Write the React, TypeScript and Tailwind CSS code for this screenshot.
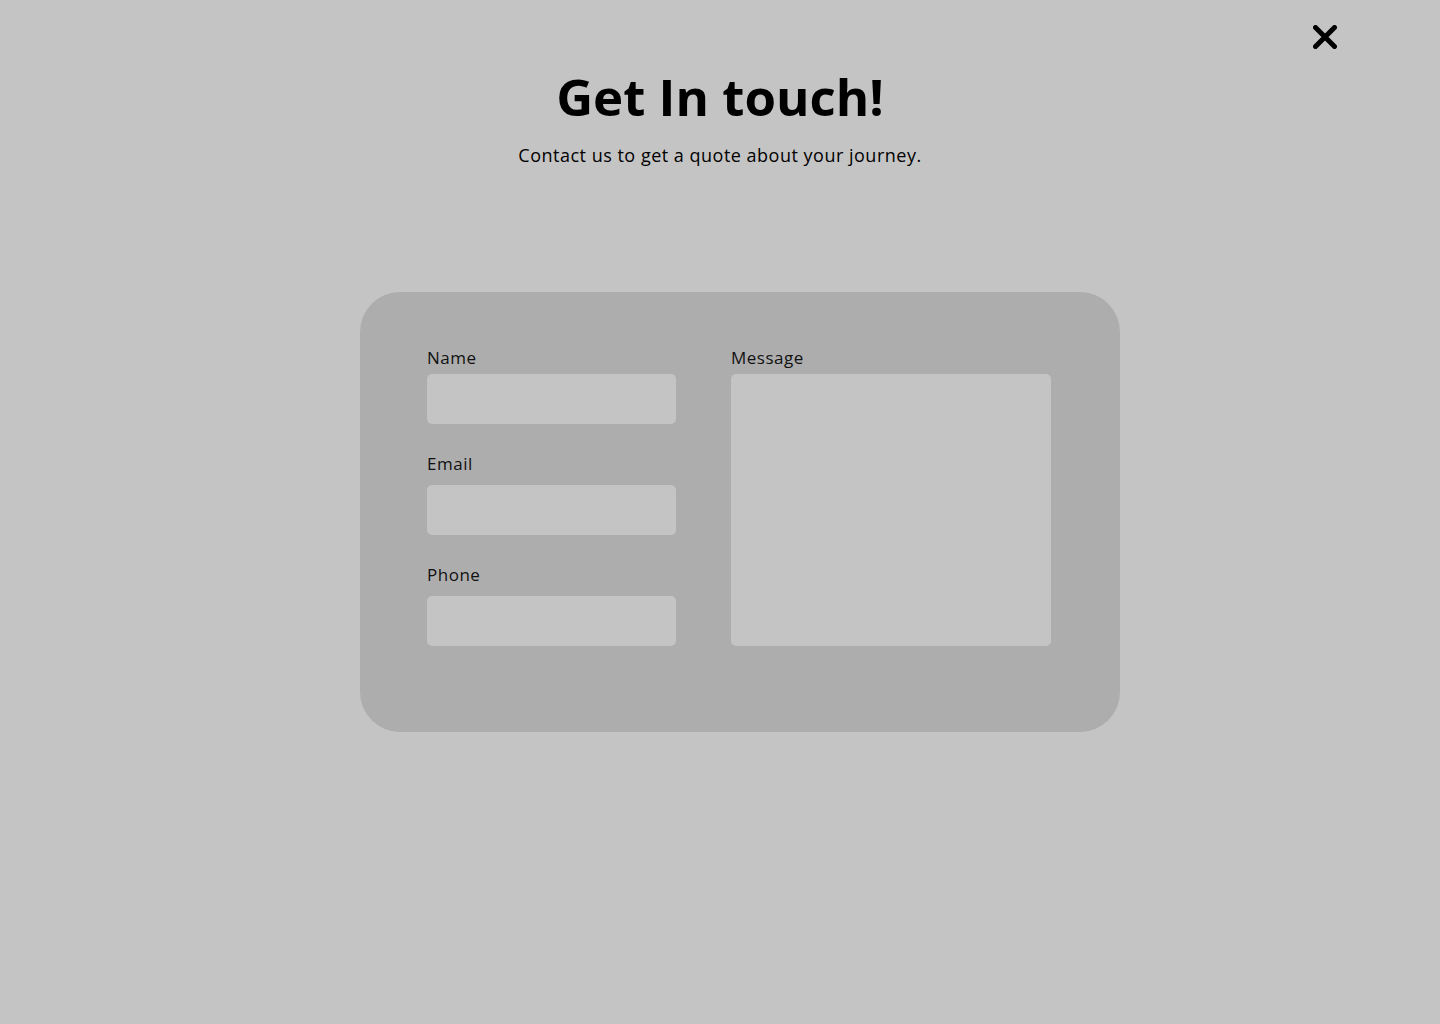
import React from "react";

function Field({ label, gap }: { label: string; gap: string }) {
	return (
		<label className={`flex flex-col ${gap}`}>
			<span className="text-[17px] leading-[20px] tracking-[0.5px] text-[#111]">{label}</span>
			<input
				type="text"
				className="h-[50px] w-full rounded-[5px] bg-[#c4c4c4] px-3 outline-none"
			/>
		</label>
	);
}

export default function App() {
	return (
		<div
			className="relative flex min-h-[1024px] w-full flex-col items-center bg-[#c4c4c4] text-black"
			style={{ fontFamily: '"Open Sans", "Liberation Sans", sans-serif' }}
		>
			<button
				type="button"
				aria-label="Close"
				className="absolute right-[103px] top-[25px] h-[24px] w-[24px]"
			>
				<svg viewBox="0 0 24 24" width="24" height="24">
					<path
						d="M2.5 2.5 L21.5 21.5 M21.5 2.5 L2.5 21.5"
						stroke="#000"
						strokeWidth="5"
						strokeLinecap="round"
					/>
				</svg>
			</button>

			<h1 className="mt-[66px] text-[51px] font-bold leading-[60px]">Get In touch!</h1>
			<p className="mt-[17px] text-[18px] leading-[24px] tracking-[0.5px]">
				Contact us to get a quote about your journey.
			</p>

			<form className="ml-[40px] mt-[125px] flex w-[760px] gap-[55px] rounded-[40px] bg-[#adadad] pb-[86px] pl-[67px] pr-[69px] pt-[56px]">
				<div className="flex w-[249px] flex-col gap-[30px]">
					<Field label="Name" gap="gap-[6px]" />
					<Field label="Email" gap="gap-[11px]" />
					<Field label="Phone" gap="gap-[11px]" />
				</div>
				<label className="flex flex-1 flex-col gap-[6px]">
					<span className="text-[17px] leading-[20px] tracking-[0.5px] text-[#111]">Message</span>
					<textarea className="h-[272px] w-full resize-none rounded-[5px] bg-[#c4c4c4] p-3 outline-none" />
				</label>
			</form>
		</div>
	);
}
